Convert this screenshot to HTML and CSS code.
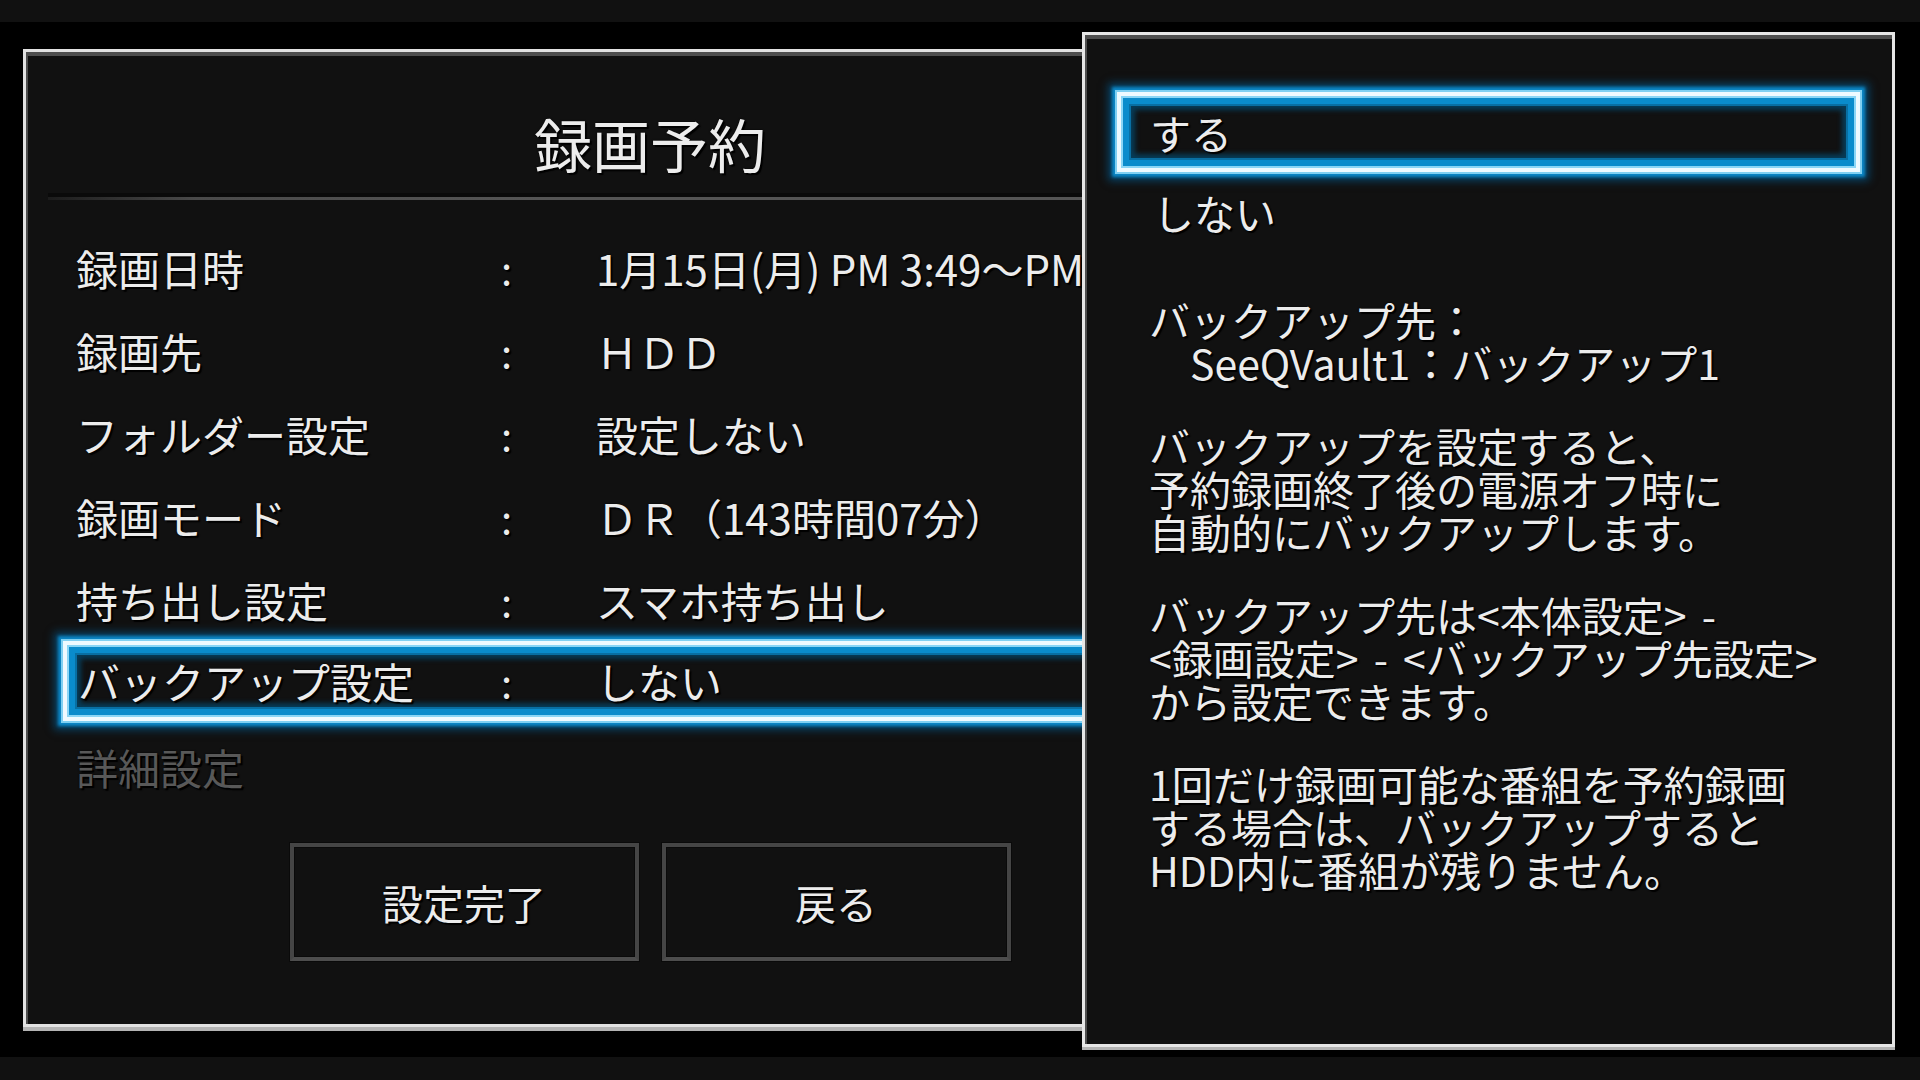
FILE: index.html
```
<!DOCTYPE html>
<html lang="ja">
<head>
    <meta charset="UTF-8">
    <title>録画予約</title>
    <link rel="stylesheet" href="styles.css">
</head>
<body>
<div class="screen">
    <div class="bar"></div>

    <div class="stage">
        <!-- Reservation panel -->
        <div class="reserve-panel">
            <h1 class="title">録画予約</h1>
            <div class="separator"></div>

            <div class="rows">
                <div class="row">
                    <span class="label">録画日時</span>
                    <span class="colon">:</span>
                    <span class="value">1月15日(月) PM 3:49〜PM</span>
                </div>
                <div class="row">
                    <span class="label">録画先</span>
                    <span class="colon">:</span>
                    <span class="value">ＨＤＤ</span>
                </div>
                <div class="row">
                    <span class="label">フォルダー設定</span>
                    <span class="colon">:</span>
                    <span class="value">設定しない</span>
                </div>
                <div class="row">
                    <span class="label">録画モード</span>
                    <span class="colon">:</span>
                    <span class="value">ＤＲ（143時間07分）</span>
                </div>
                <div class="row">
                    <span class="label">持ち出し設定</span>
                    <span class="colon">:</span>
                    <span class="value">スマホ持ち出し</span>
                </div>
                <div class="row row-selected focus">
                    <span class="label">バックアップ設定</span>
                    <span class="colon">:</span>
                    <span class="value">しない</span>
                </div>
                <div class="row row-disabled">
                    <span class="label">詳細設定</span>
                </div>
            </div>

            <div class="buttons">
                <div class="btn">設定完了</div>
                <div class="btn">戻る</div>
            </div>
        </div>

        <!-- Option popup -->
        <div class="option-panel">
            <div class="option focus">する</div>
            <div class="option">しない</div>

            <div class="help">
                <div class="para">
                    <div class="line">バックアップ先：</div>
                    <div class="line indent">SeeQVault1：バックアップ1</div>
                </div>
                <div class="para">
                    <div class="line">バックアップを設定すると、</div>
                    <div class="line">予約録画終了後の電源オフ時に</div>
                    <div class="line">自動的にバックアップします。</div>
                </div>
                <div class="para">
                    <div class="line">バックアップ先は&lt;本体設定&gt; -</div>
                    <div class="line">&lt;録画設定&gt; - &lt;バックアップ先設定&gt;</div>
                    <div class="line">から設定できます。</div>
                </div>
                <div class="para">
                    <div class="line">1回だけ録画可能な番組を予約録画</div>
                    <div class="line">する場合は、バックアップすると</div>
                    <div class="line">HDD内に番組が残りません。</div>
                </div>
            </div>
        </div>
    </div>

    <div class="bar"></div>
</div>
</body>
</html>
```

FILE: styles.css
```
* {
    box-sizing: border-box;
}
body {
    margin: 0;
    background: #000;
    font-family: "Noto Sans CJK JP", "Noto Sans", sans-serif;
    color: #ececec;
}
.screen {
    width: 1920px;
    height: 1080px;
    display: flex;
    flex-direction: column;
    overflow: hidden;
}
.bar {
    height: 22px;
    background: #111;
}
.bar:last-child {
    height: 23px;
}
.stage {
    position: relative;
    flex: 1;
    background: #000;
}

/* panels */
.reserve-panel {
    width: 1254px;
    height: 978px;
    margin: 27px 0 0 23px;
    background: #111;
    border: 3px solid #e2e2e2;
    box-shadow: inset 2px 4px 0 #4e4e4e, 0 4px 0 #b4b4b4;
    overflow: hidden;
}
.option-panel {
    position: absolute;
    top: 10px;
    left: 1082px;
    width: 813px;
    height: 1015px;
    background: #111;
    border: 3px solid #e6e6e6;
    box-shadow: inset 2px 4px 0 #4e4e4e, 0 3px 0 #b4b4b4;
    padding: 57px 32px 0 32px;
}

.title {
    margin: 0;
    padding: 62px 0 21px;
    font-size: 58px;
    font-weight: 400;
    line-height: 58px;
    text-align: center;
    text-shadow: 2px 2px 1px #000, 0 0 2px #000;
}
.separator {
    height: 7px;
    margin-left: 22px;
    border-top: 4px solid #0a0a0a;
    background: linear-gradient(to right, #1c1c1c, #4a4a4a 12%, #555 40%, #555);
}

/* setting rows */
.rows {
    margin-top: 26px;
}
.row {
    display: grid;
    grid-template-columns: 425px 95px auto;
    align-items: center;
    height: 83px;
    padding-left: 50px;
    font-size: 42px;
    line-height: 1;
    white-space: nowrap;
    text-shadow: 2px 2px 1px #000, 0 0 2px #000;
}
.colon {
    font-size: 40px;
}
.row-selected {
    height: 80px;
    margin: 0 0 4px 37px;
    padding-left: 11px;
    grid-template-columns: 423px 95px auto;
}
.row-disabled {
    color: #585858;
}

/* focus frame */
.focus {
    border: 4px solid #eefaff;
    box-shadow:
        0 0 0 2px #7fd0f2,
        0 0 3px 5px #0b88c8,
        0 0 8px 9px rgba(6, 80, 125, 0.75),
        inset 0 0 0 2px #8ad6f6,
        inset 0 0 0 8px #0a8ccc,
        inset 0 0 0 10px #086fa3,
        inset 0 0 5px 14px #073c58;
}

/* buttons */
.buttons {
    display: flex;
    justify-content: center;
    gap: 23px;
    margin-top: 35px;
}
.btn {
    width: 349px;
    height: 118px;
    border: 4px solid #454545;
    border-bottom-color: #4d4d4d;
    box-shadow: inset 0 0 0 1px #0a0a0a, 0 0 0 1px #0a0a0a;
    display: flex;
    align-items: center;
    justify-content: center;
    font-size: 41px;
    text-shadow: 2px 2px 1px #000, 0 0 2px #000;
}

/* option list */
.option {
    height: 80px;
    display: flex;
    align-items: center;
    padding-left: 36px;
    font-size: 41px;
    text-shadow: 2px 2px 1px #000, 0 0 2px #000;
}
.option.focus {
    padding-left: 29px;
}

.help {
    margin-top: 46px;
    padding-left: 32px;
    font-size: 41px;
    white-space: nowrap;
    word-spacing: 6px;
    text-shadow: 2px 2px 1px #000, 0 0 2px #000;
}
.para {
    margin-bottom: 40px;
}
.line {
    height: 43px;
    line-height: 43px;
}
.indent {
    padding-left: 41px;
    word-spacing: 0;
}
```
